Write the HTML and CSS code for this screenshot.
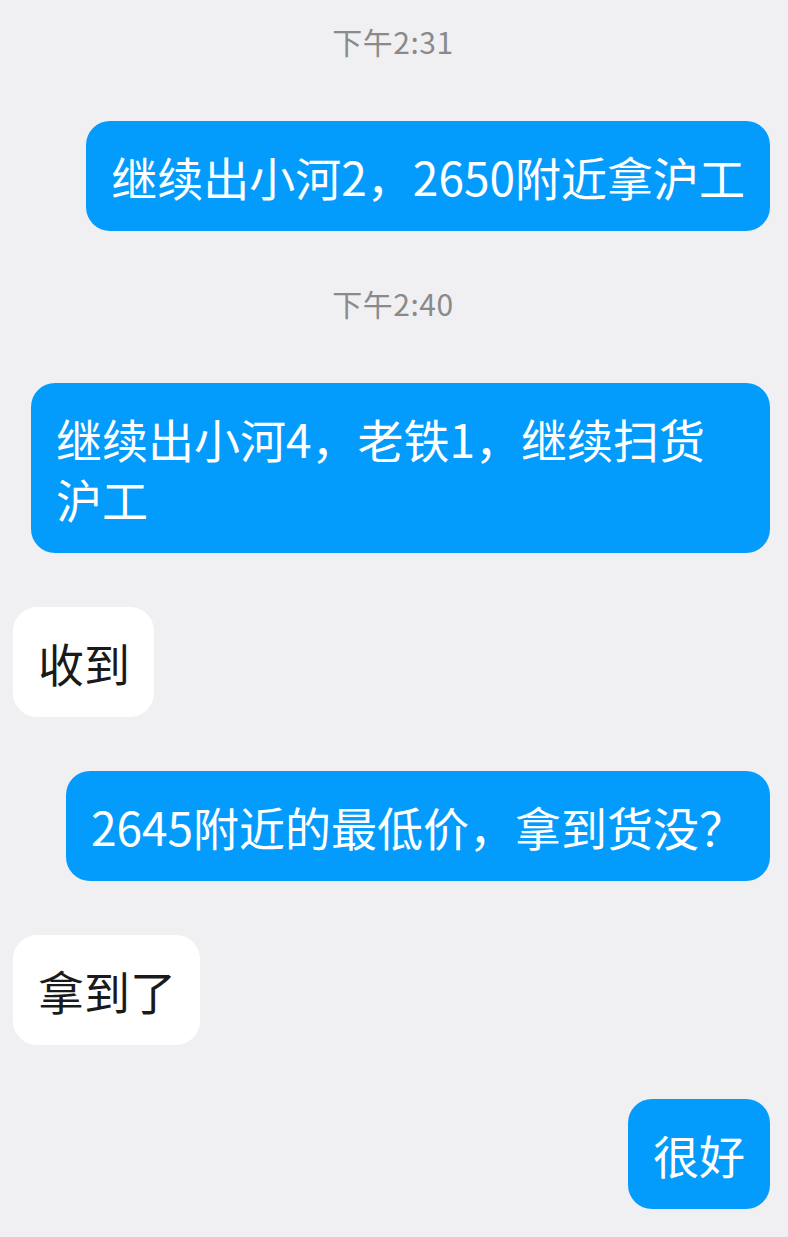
FILE: index.html
```html
<!DOCTYPE html>
<html lang="zh-CN">
<head>
<meta charset="utf-8">
<title>Chat</title>
<link rel="stylesheet" href="styles.css">
</head>
<body>
<div class="chat">
  <div class="time">下午2:31</div>
  <div class="row sent"><div class="bubble">继续出小河2，2650附近拿沪工</div></div>
  <div class="time">下午2:40</div>
  <div class="row sent"><div class="bubble">继续出小河4，老铁1，继续扫货沪工</div></div>
  <div class="row recv"><div class="bubble">收到</div></div>
  <div class="row sent"><div class="bubble">2645附近的最低价，拿到货没？</div></div>
  <div class="row recv"><div class="bubble">拿到了</div></div>
  <div class="row sent"><div class="bubble">很好</div></div>
</div>
</body>
</html>
```

FILE: styles.css
```css
html, body {
  margin: 0;
  padding: 0;
  background: #f0f0f2;
}
body {
  font-family: "Noto Sans CJK SC", "Noto Sans", sans-serif;
  width: 788px;
  height: 1237px;
  overflow: hidden;
}
.chat {
  display: flex;
  flex-direction: column;
  padding: 23px 18px 0 13px;
}
.time {
  text-align: center;
  font-size: 30px;
  line-height: 36px;
  height: 36px;
  color: #8a8a8c;
  margin-bottom: 62px;
  padding-left: 3px;
  letter-spacing: 0.5px;
}
.row {
  display: flex;
  margin-bottom: 54px;
}
.row.sent {
  justify-content: flex-end;
}
.row.recv {
  justify-content: flex-start;
}
.bubble {
  max-width: 689px;
  padding: 25px;
  font-size: 46px;
  line-height: 60px;
  border-radius: 24px;
}
.recv .bubble {
  padding: 25px 24px 25px 25px;
}
.sent .bubble {
  background: #049cfc;
  color: #ffffff;
}
.recv .bubble {
  background: #ffffff;
  color: #1a1a1a;
}
```
